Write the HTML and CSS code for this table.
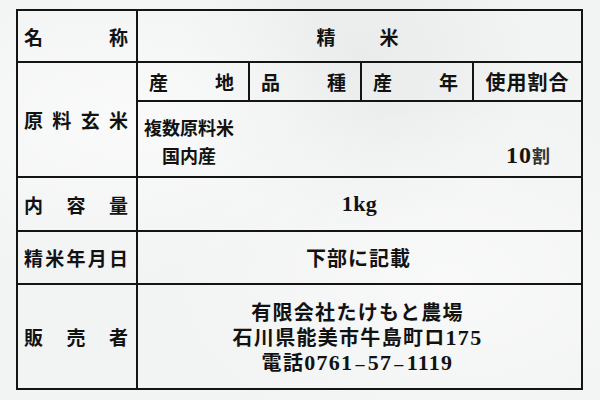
FILE: index.html
```html
<!DOCTYPE html>
<html lang="ja">
<head>
<meta charset="utf-8">
<title>精米 表示</title>
<link rel="stylesheet" href="styles.css">
</head>
<body>
<div class="label">
  <div class="key just"><span>名</span><span>称</span></div>
  <div class="val center"><div class="pair"><span>精</span><span>米</span></div></div>

  <div class="key just"><span>原</span><span>料</span><span>玄</span><span>米</span></div>
  <div class="val origin">
    <div class="subhead">
      <div class="sh just"><span>産</span><span>地</span></div>
      <div class="sh just"><span>品</span><span>種</span></div>
      <div class="sh just"><span>産</span><span>年</span></div>
      <div class="sh last">使用割合</div>
    </div>
    <div class="origin-body">
      <div class="line1">複数原料米</div>
      <div class="line2"><span class="place">国内産</span><span class="ratio"><span class="num">10</span><span class="wari">割</span></span></div>
    </div>
  </div>

  <div class="key just"><span>内</span><span>容</span><span>量</span></div>
  <div class="val center"><span class="num kg">1kg</span></div>

  <div class="key just"><span>精</span><span>米</span><span>年</span><span>月</span><span>日</span></div>
  <div class="val center"><span class="note">下部に記載</span></div>

  <div class="key just last-row"><span>販</span><span>売</span><span>者</span></div>
  <div class="val center last-row">
    <div class="seller">
      <div class="sl">有限会社たけもと農場</div>
      <div class="sl">石川県能美市牛島町ロ<span class="num">175</span></div>
      <div class="sl">電話<span class="num">0761</span><span class="num dash">–</span><span class="num">57</span><span class="num dash">–</span><span class="num">1119</span></div>
    </div>
  </div>
</div>
</body>
</html>
```

FILE: styles.css
```css
html, body {
  margin: 0;
  padding: 0;
}
body {
  width: 600px;
  height: 400px;
  overflow: hidden;
  background: #f2f3f3;
  background-image:
    radial-gradient(ellipse at 20% 30%, rgba(255,255,255,0.6), rgba(255,255,255,0) 40%),
    radial-gradient(ellipse at 75% 70%, rgba(255,255,255,0.5), rgba(255,255,255,0) 45%),
    radial-gradient(ellipse at 60% 15%, rgba(225,228,228,0.5), rgba(225,228,228,0) 35%);
  font-family: "Noto Sans CJK JP", "Noto Sans", sans-serif;
  font-weight: 700;
  color: #121212;
}
.label {
  box-sizing: border-box;
  margin: 9px 0 0 16px;
  width: 567px;
  height: 381px;
  border: 2px solid #141414;
  display: grid;
  grid-template-columns: 120px 1fr;
  grid-template-rows: 52px 115px 54px 53px 1fr;
}
.key, .val {
  box-sizing: border-box;
  border-bottom: 2px solid #141414;
}
.key {
  border-right: 2px solid #141414;
  font-size: 19px;
  padding: 0 8px 0 6px;
}
.last-row {
  border-bottom: none;
}
.just {
  display: flex;
  align-items: center;
  justify-content: space-between;
}
.center {
  display: flex;
  align-items: center;
  justify-content: center;
}
.val {
  font-size: 19px;
}
.pair {
  display: flex;
  gap: 44px;
  margin-right: 4px;
}
.origin {
  display: flex;
  flex-direction: column;
}
.subhead {
  display: grid;
  grid-template-columns: 112px 112px 112px 1fr;
  height: 39px;
  box-sizing: border-box;
  border-bottom: 2px solid #141414;
}
.sh {
  box-sizing: border-box;
  border-right: 2px solid #141414;
  padding: 0 14px 0 11px;
  font-size: 19px;
}
.sh.last {
  border-right: none;
  display: flex;
  align-items: center;
  justify-content: center;
  padding: 0;
  font-size: 20px;
  letter-spacing: 1px;
}
.origin-body {
  padding: 11px 31px 0 6px;
  line-height: 28px;
  font-size: 18px;
}
.line2 {
  display: flex;
  justify-content: space-between;
  align-items: baseline;
}
.place {
  margin-left: 18px;
}
.num {
  font-family: "Liberation Serif", "DejaVu Serif", serif;
  font-weight: 700;
}
.ratio .num {
  font-size: 24px;
  letter-spacing: 1px;
}
.wari {
  font-size: 18px;
  color: #333;
}
.kg {
  font-size: 22px;
  letter-spacing: 0.5px;
}
.note {
  font-size: 20px;
  letter-spacing: 1px;
  margin-right: 2px;
}
.seller {
  display: flex;
  flex-direction: column;
  align-items: center;
  margin-right: 4px;
  font-size: 20px;
  letter-spacing: 1.3px;
}
.sl {
  height: 25px;
  line-height: 25px;
  white-space: nowrap;
}
.seller .num {
  font-size: 22px;
  letter-spacing: 1.3px;
  line-height: 20px;
}
.seller .dash {
  font-size: 18px;
  margin: 0 2px;
}
```
